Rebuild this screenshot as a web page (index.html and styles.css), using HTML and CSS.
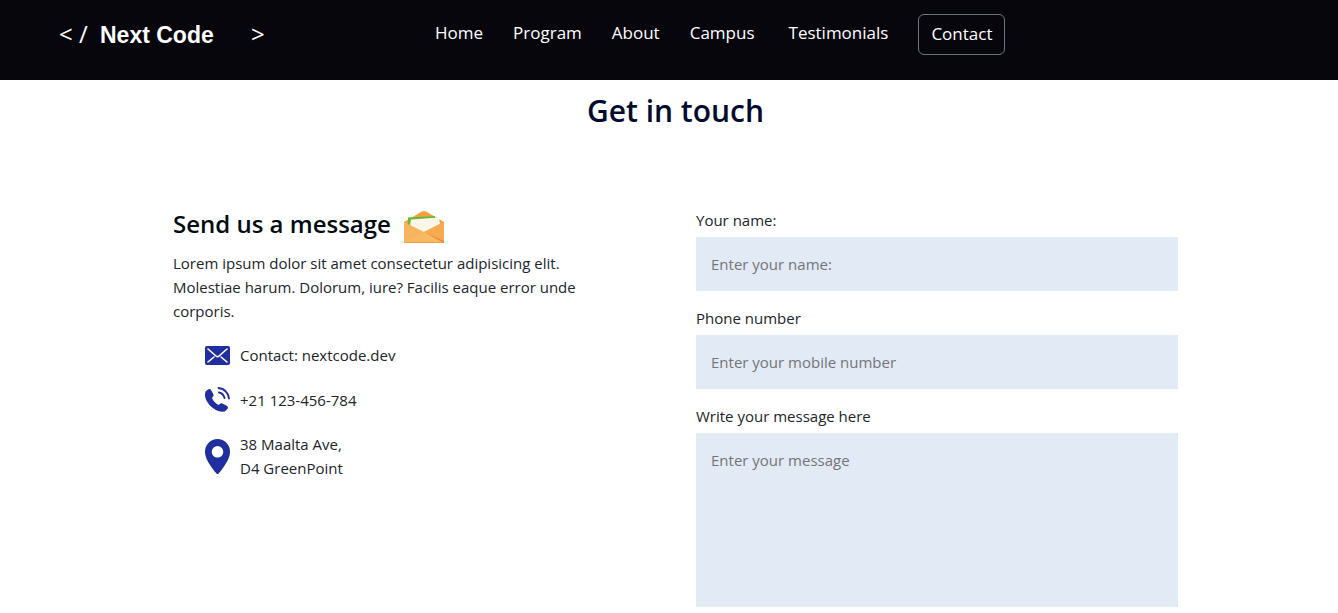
FILE: index.html
```html
<!DOCTYPE html>
<html lang="en">
<head>
<meta charset="utf-8">
<meta name="viewport" content="width=device-width, initial-scale=1">
<title>Next Code</title>
<link rel="stylesheet" href="styles.css">
</head>
<body>
<header class="navbar">
  <a class="brand" href="#"><span class="brand-open">&lt; <span class="brand-slash">/</span></span><span class="brand-name">Next Code</span><span class="brand-close">&gt;</span></a>
  <nav class="nav-links">
    <a class="nav-link" href="#">Home</a>
    <a class="nav-link" href="#">Program</a>
    <a class="nav-link" href="#">About</a>
    <a class="nav-link nav-link-campus" href="#">Campus</a>
    <a class="nav-link" href="#">Testimonials</a>
    <button class="nav-button" type="button">Contact</button>
  </nav>
</header>
<main class="contact">
  <h1 class="contact-title">Get in touch</h1>
  <div class="contact-grid">
    <section class="info">
      <h2 class="info-title">Send us a message
        <svg class="info-mail" viewBox="0 0 40 32" aria-hidden="true">
          <path d="M0 11 17 1Q20-1 23 1L40 11V20H0Z" fill="#f3a23f"/>
          <path d="M4 6.500 31 5V10L8 15H4Z" fill="#66b83b"/>
          <path d="M7 8.500 35 6.500 36 13 20 22 6 15Z" fill="#fcf6e6"/>
          <path d="M0 11 20 21 40 11V32H0Z" fill="#f7b35e"/>
          <path d="M20 21 40 11V31Z" fill="#f7aa50"/>
          <path d="M20 21 40 30V32Z" fill="#e68a35"/>
          <path d="M0 31 20 21 38 32H0Z" fill="#f8b963"/>
          <path d="M0 31H40V32H0Z" fill="#f09d3e"/>
        </svg>
      </h2>
      <p class="info-text">Lorem ipsum dolor sit amet consectetur adipisicing elit. Molestiae harum. Dolorum, iure? Facilis eaque error unde corporis.</p>
      <ul class="info-list">
        <li class="info-item">
          <svg class="info-icon icon-mail" viewBox="0 0 25 19" aria-hidden="true"><rect width="25" height="19" rx="2" fill="#202e9f"/><path d="M3 3 11 10Q12.500 11.500 14 10L22 3M3 16 9 11M22 16 16 11" fill="none" stroke="#fff" stroke-width="1.600" stroke-linecap="round"/></svg>
          <span>Contact: nextcode.dev</span>
        </li>
        <li class="info-item">
          <svg class="info-icon icon-phone" viewBox="0 0 25 25" aria-hidden="true"><path d="M1 4 3.500 2.300Q5 1.500 6 3L8.300 7Q9 8.500 8 9.500L7 11Q8.500 15 13.500 18L15.500 16.500Q16.500 16 18 16.700L22 19Q23.500 20 22.700 21.500L21 23.500Q19 25.500 14 24.300Q6 21.500 2 14.500Q-1.500 8 1 4Z" fill="#202e9f"/><path d="M14 5.500Q18.500 6.500 19.500 11M13.500 1Q22.500 2 24 11.500" fill="none" stroke="#202e9f" stroke-width="1.900" stroke-linecap="round"/></svg>
          <span>+21 123-456-784</span>
        </li>
        <li class="info-item">
          <svg class="info-icon icon-pin" viewBox="0 0 25 35" aria-hidden="true"><path d="M12.500 0A12.500 12.500 0 0 0 0 12.500C0 18 3 23 6 27.500Q9 32 11.500 34.500Q12.500 35.500 13.500 34.500Q16 32 19 27.500C22 23 25 18 25 12.500A12.500 12.500 0 0 0 12.500 0ZM12.500 7A5.800 5.800 0 1 1 12.500 18.600A5.800 5.800 0 1 1 12.500 7Z" fill="#202e9f" fill-rule="evenodd"/></svg>
          <span>38 Maalta Ave,<br>D4 GreenPoint</span>
        </li>
      </ul>
    </section>
    <form class="form">
      <label class="form-label" for="name">Your name:</label>
      <input class="form-field" id="name" type="text" placeholder="Enter your name:">
      <label class="form-label" for="phone">Phone number</label>
      <input class="form-field" id="phone" type="tel" placeholder="Enter your mobile number">
      <label class="form-label" for="message">Write your message here</label>
      <textarea class="form-field form-message" id="message" placeholder="Enter your message"></textarea>
    </form>
  </div>
</main>
</body>
</html>
```
FILE: styles.css
```css
* { box-sizing: border-box; }

body {
  margin: 0;
  background: #fff;
  color: #212529;
  font: 15px/24px "Open Sans", "Noto Sans", sans-serif;
}

.navbar {
  display: flex;
  align-items: flex-start;
  min-height: 80px;
  padding: 14px 60px 0 59px;
  background: #07060c;
}

.brand {
  display: flex;
  width: 376px;
  padding-top: 5px;
  color: #fff;
  font: 24px/30px "Liberation Sans", Arial, sans-serif;
  text-decoration: none;
}

.brand-open { width: 41px; font-family: "Open Sans", sans-serif; white-space: nowrap; }
.brand-name { width: 151px; font-size: 23px; font-weight: 700; line-height: 32px; }
.brand-close { font-family: "Open Sans", sans-serif; }

.nav-links {
  display: flex;
  align-items: flex-start;
  gap: 30px;
}

.nav-link {
  padding-top: 7px;
  color: #fff;
  font-size: 17px;
  text-decoration: none;
}

.nav-link-campus { padding-right: 4px; }

.nav-button {
  padding: 7px 12px 8px;
  border: 1px solid #6c757d;
  border-radius: 6px;
  background: transparent;
  color: #fff;
  font: 17px/24px "Open Sans", "Noto Sans", sans-serif;
}

.contact { padding: 12px 160px 6px 173px; }

.contact-title {
  margin: 0;
  color: #020b2d;
  font-size: 30px;
  font-weight: 600;
  line-height: 38px;
  text-align: center;
}

.contact-grid {
  display: grid;
  grid-template-columns: 1fr 1fr;
  gap: 41px;
  padding-top: 78px;
}

.info-title {
  display: flex;
  align-items: flex-start;
  gap: 13px;
  margin: 0 0 8px;
  color: #020b12;
  font-size: 24px;
  font-weight: 600;
  line-height: 32px;
}

.info-mail { width: 40px; height: 32px; margin-top: 3px; }

.info { padding-right: 60px; }
.info-text { margin: 0; }

.info-list {
  display: grid;
  gap: 20px;
  margin: 20px 0 0;
  padding: 0 0 0 32px;
  list-style: none;
}

.info-item { display: flex; align-items: center; gap: 10px; }
.info-icon { width: 25px; flex: none; }
.icon-mail { height: 19px; }
.icon-phone { height: 25px; }
.icon-pin { height: 35px; }

.form { display: flex; flex-direction: column; }
.form-label { margin-bottom: 5px; }

.form-field {
  width: 100%;
  height: 54px;
  margin: 0 0 15px;
  padding: 15px;
  border: 0;
  border-radius: 0;
  background: #e2eaf6;
  color: #212529;
  font: inherit;
}

.form-field::placeholder { color: #757575; opacity: 1; }
.form-message { height: 174px; margin: 0; resize: none; }
```
